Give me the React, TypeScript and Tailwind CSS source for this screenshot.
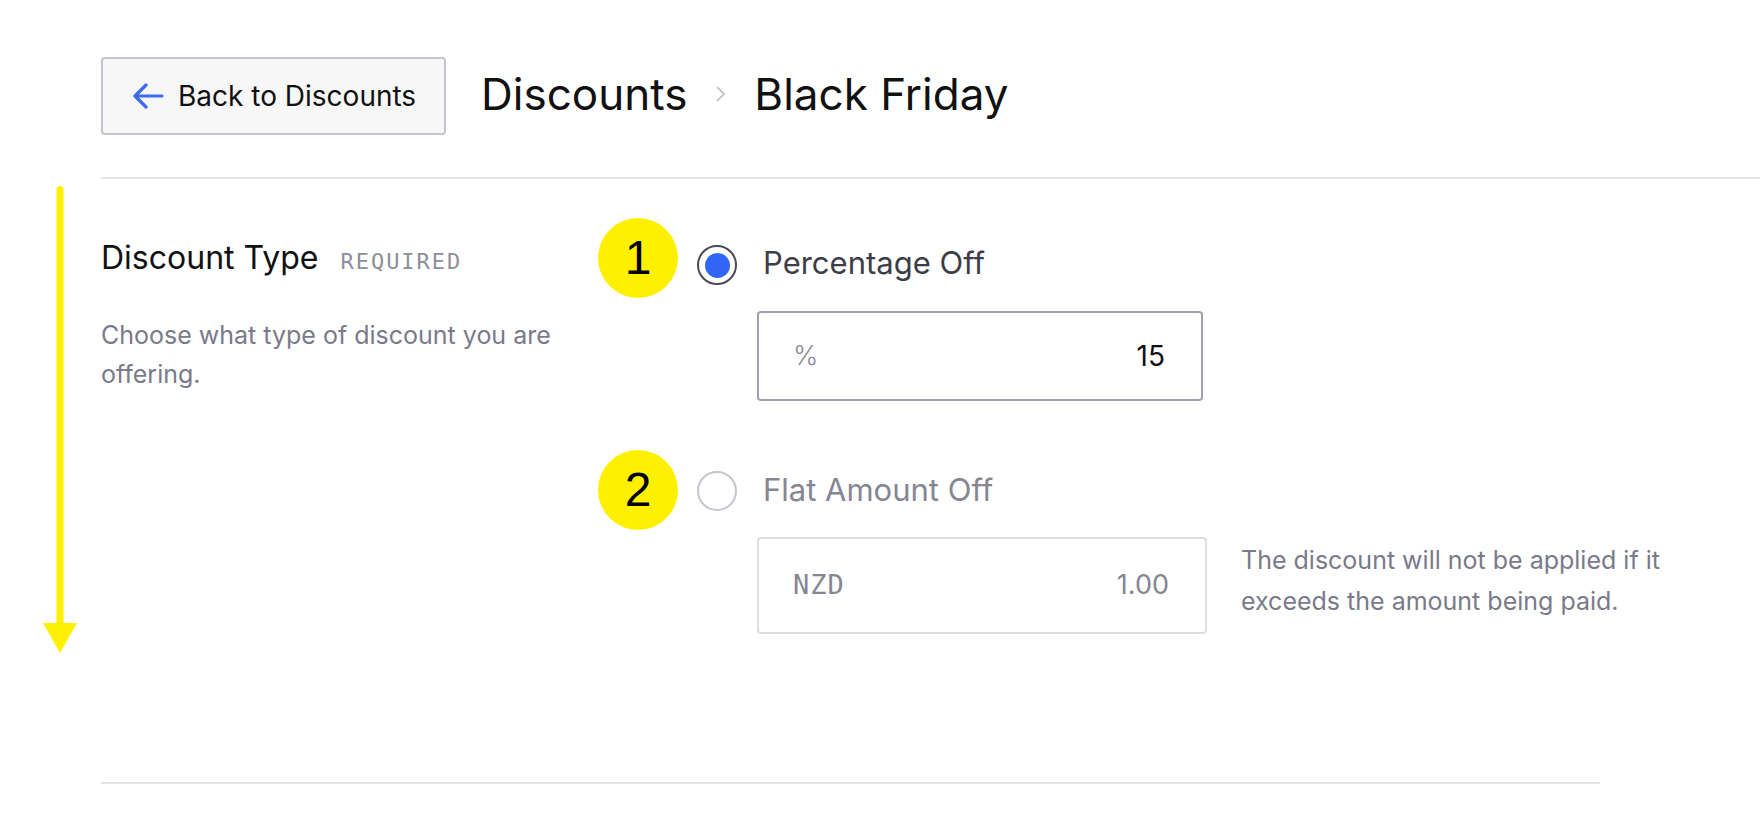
import React, { useState } from "react";

const sans = "font-['Inter','Liberation_Sans',sans-serif]";
const mono = "font-['DejaVu_Sans_Mono','Liberation_Mono',monospace]";

function StepBadge({ n }: { n: number }) {
  return (
    <div className="flex h-[80px] w-[80px] shrink-0 items-center justify-center rounded-full bg-[#fff000] font-['Liberation_Sans',Arial,sans-serif] text-[48px] leading-none text-black">
      {n}
    </div>
  );
}

function Radio({ checked }: { checked: boolean }) {
  return (
    <span
      className={
        checked
          ? "flex h-[40px] w-[40px] shrink-0 items-center justify-center rounded-full border-2 border-[#4a4a58] bg-white"
          : "flex h-[40px] w-[40px] shrink-0 items-center justify-center rounded-full border-2 border-[#c6c6ce] bg-white"
      }
    >
      {checked && <span className="h-[25px] w-[25px] rounded-full bg-[#2f66f5]" />}
    </span>
  );
}

export default function App() {
  const [type, setType] = useState<"percent" | "flat">("percent");

  return (
    <div className={`relative min-h-screen bg-white ${sans}`}>
      {/* annotation arrow in the left margin */}
      <svg
        className="absolute left-[40px] top-[186px]"
        width="40"
        height="468"
        viewBox="0 0 40 468"
        aria-hidden
      >
        <rect x="16.5" y="0" width="7" height="445" rx="3.5" fill="#fff000" />
        <path d="M3 437 L37 437 L20 467 Z" fill="#fff000" />
      </svg>

      <header className="flex items-center pl-[101px] pt-[57px] pb-[42px]">
        <button
          type="button"
          className="flex h-[78px] w-[345px] items-center gap-[14px] rounded-[4px] border-2 border-[#c4c4cc] bg-[#f7f7f8] pl-[29px] text-[28px] text-[#111]"
        >
          <svg width="32" height="26" viewBox="0 0 32 26" fill="none" aria-hidden>
            <path
              d="M30 13H4M14 2L3 13l11 11"
              stroke="#3b6cf2"
              strokeWidth="3.2"
              strokeLinecap="round"
              strokeLinejoin="round"
            />
          </svg>
          <span>Back to Discounts</span>
        </button>
        <nav className="-mt-[4px] ml-[35px] flex items-center text-[44px] leading-none text-[#111]">
          <span>Discounts</span>
          <svg className="mx-[28px]" width="11" height="18" viewBox="0 0 11 18" fill="none" aria-hidden>
            <path d="M2 2l7 7-7 7" stroke="#c8c8cc" strokeWidth="2" />
          </svg>
          <span>Black Friday</span>
        </nav>
      </header>

      <div className="ml-[101px] h-[2px] bg-[#e3e3e7]" />

      <section className="ml-[101px] flex pb-[148px] pt-[39px]">
        <div className="w-[497px] shrink-0 pt-[20px]">
          <div className="flex items-baseline gap-[22px]">
            <h2 className="text-[32px] leading-[40px] text-[#111]">Discount Type</h2>
            <span className={`${mono} text-[22px] tracking-[2px] text-[#8e8e9c]`}>REQUIRED</span>
          </div>
          <p className="mt-[38px] w-[460px] text-[25px] leading-[39px] text-[#7a7a8a]">
            Choose what type of discount you are offering.
          </p>
        </div>

        <div className="flex flex-col">
          <div className="flex items-start" onClick={() => setType("percent")}>
            <StepBadge n={1} />
            <div className="ml-[19px] mt-[27px] flex items-center gap-[26px]">
              <Radio checked={type === "percent"} />
              <span className="-mt-[5px] text-[31px] leading-none text-[#3d3d4a]">Percentage Off</span>
            </div>
          </div>
          <div className="ml-[159px] mt-[13px] flex h-[90px] w-[446px] items-center justify-between rounded-[4px] border-2 border-[#a2a2ae] pl-[34px] pr-[36px]">
            <span className="text-[27px] font-light text-[#8a8a98]">%</span>
            <span className="text-[28px] text-[#111]">15</span>
          </div>

          <div className="mt-[49px] flex items-start" onClick={() => setType("flat")}>
            <StepBadge n={2} />
            <div className="ml-[19px] mt-[21px] flex items-center gap-[26px]">
              <Radio checked={type === "flat"} />
              <span className="-mt-[3px] text-[31px] leading-none text-[#858594]">Flat Amount Off</span>
            </div>
          </div>
          <div className="ml-[159px] mt-[7px] flex items-start gap-[34px]">
            <div className="flex h-[97px] w-[450px] items-center justify-between rounded-[4px] border-2 border-[#dedee2] pl-[34px] pr-[36px]">
              <span className={`${mono} text-[27px] tracking-[1px] text-[#858594]`}>NZD</span>
              <span className="text-[27px] text-[#858594]">1.00</span>
            </div>
            <p className="mt-[3px] w-[450px] text-[25px] leading-[41px] text-[#7a7a8a]">
              The discount will not be applied if it exceeds the amount being paid.
            </p>
          </div>
        </div>
      </section>

      <div className="ml-[101px] h-[2px] w-[1499px] bg-[#e3e3e7]" />
    </div>
  );
}
